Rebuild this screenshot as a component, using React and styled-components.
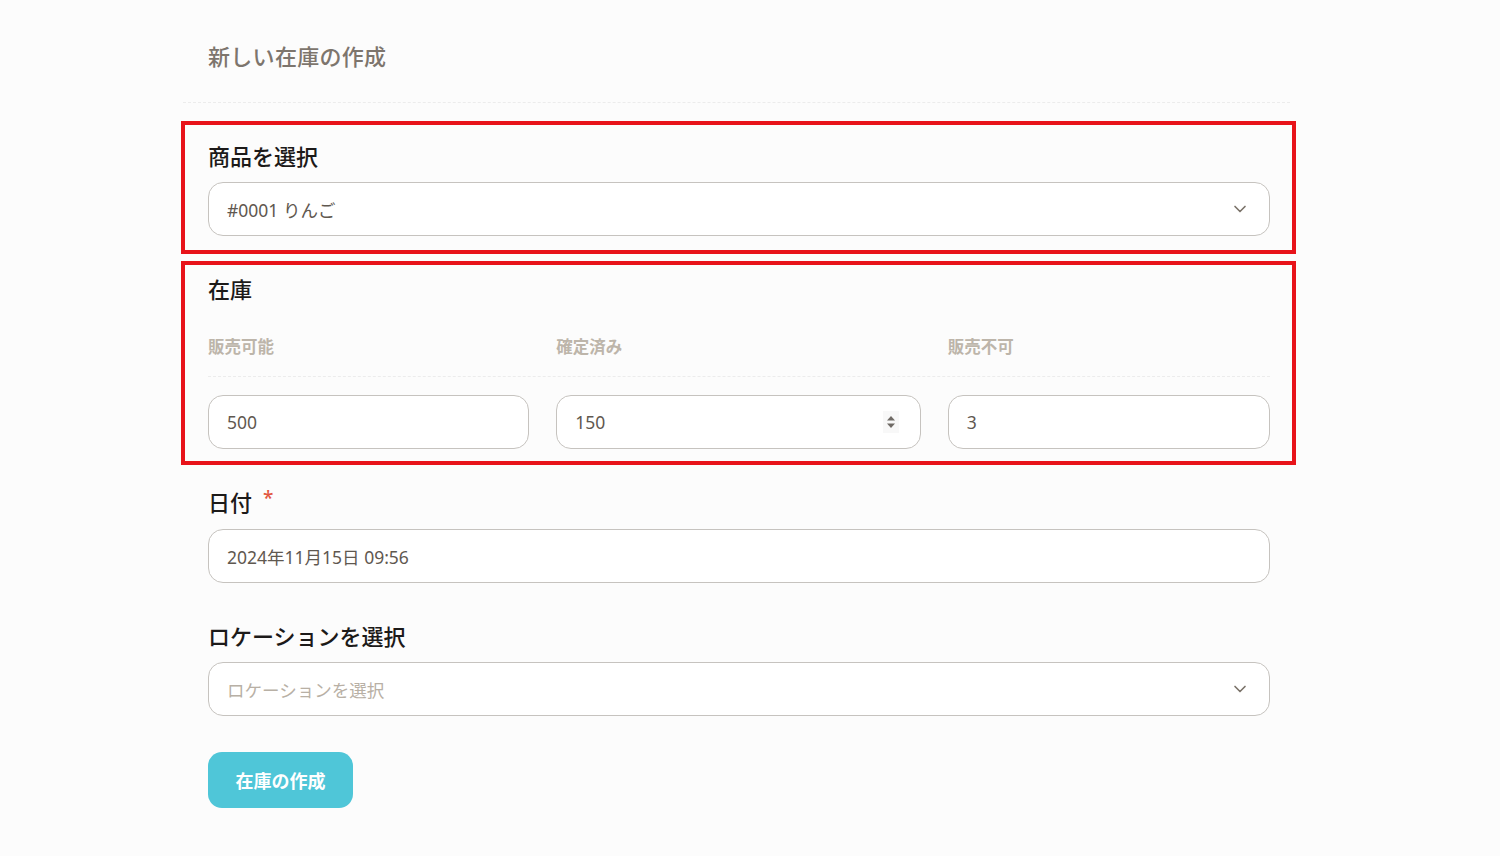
import React from "react";
import styled, { createGlobalStyle } from "styled-components";
import { ChevronDown } from "lucide-react";

const GlobalStyle = createGlobalStyle`
  html, body {
    margin: 0;
    padding: 0;
    background: #fcfcfc;
  }
  body {
    font-family: "Noto Sans", "Noto Sans CJK JP", sans-serif;
  }
`;

const Page = styled.main`
  width: 1115px;
  margin-left: 181px;
  padding-top: 41px;
  padding-bottom: 40px;
`;

const Title = styled.h1`
  margin: 0;
  padding-left: 27px;
  font-size: 22px;
  line-height: 30px;
  font-weight: 500;
  letter-spacing: 0.3px;
  color: #7d756d;
`;

const Divider = styled.hr`
  margin: 31px 6px 18px 2px;
  border: 0;
  border-top: 1px dashed #ececec;
  height: 0;
`;

const Section = styled.section`
  display: flex;
  flex-direction: column;
  border: 4px solid ${(p) => (p.$marked ? "#e8131a" : "transparent")};
  padding: ${(p) => p.$pad || "12px 22px 12px 23px"};
  & + & {
    margin-top: 7px;
  }
`;

const Label = styled.div`
  display: flex;
  align-items: flex-start;
  gap: 11px;
  font-size: 22px;
  line-height: 28px;
  font-weight: 500;
  color: #1c1a19;
  margin-bottom: ${(p) => p.$gap || "12px"};
`;

const Required = styled.span`
  color: #e2573f;
  font-size: 19px;
  line-height: 20px;
`;

const Field = styled.div`
  height: 54px;
  box-sizing: border-box;
  display: flex;
  align-items: center;
  justify-content: space-between;
  padding: 0 19px 0 18px;
  border: 1px solid #c6c3bf;
  border-radius: 15px;
  background: #fff;
  font-size: 17.5px;
  color: ${(p) => (p.$placeholder ? "#b8b0a5" : "#5f5850")};
`;

const StockGrid = styled.div`
  display: grid;
  grid-template-columns: 321fr 364fr 322fr;
  column-gap: 27px;
`;

const SubLabel = styled.div`
  font-size: 16.5px;
  line-height: 22px;
  font-weight: 700;
  color: #bdb5aa;
`;

const SubDivider = styled.div`
  grid-column: 1 / -1;
  border-top: 1px dashed #ececec;
  margin: 18px 0;
`;

const Spinner = styled.span`
  display: flex;
  align-items: center;
  justify-content: center;
  width: 16px;
  height: 22px;
  margin-right: 1px;
  background: #f8f8f8;
`;

const ButtonRow = styled.div`
  padding-left: 27px;
  margin-top: 20px;
`;

const SubmitButton = styled.button`
  width: 145px;
  height: 56px;
  border: 0;
  border-radius: 14px;
  background: #4fc6d8;
  color: #fff;
  font-family: inherit;
  font-size: 18px;
  font-weight: 700;
  cursor: pointer;
`;

const Chevron = () => <ChevronDown size={20} color="#7a7269" strokeWidth={2} />;

const SpinIcon = () => (
  <Spinner>
    <svg width="10" height="16" viewBox="0 0 10 16">
      <path d="M5 2 L9 6.5 H1 Z" fill="#6f6a65" />
      <path d="M5 14 L9 9.5 H1 Z" fill="#6f6a65" />
    </svg>
  </Spinner>
);

export default function App() {
  return (
    <>
      <GlobalStyle />
      <Page>
        <Title>新しい在庫の作成</Title>
        <Divider />

        {/* 商品 */}
        <Section $marked $pad="17px 22px 14px 23px">
          <Label>商品を選択</Label>
          <Field>
            <span>#0001 りんご</span>
            <Chevron />
          </Field>
        </Section>

        {/* 在庫 */}
        <Section $marked $pad="10px 22px 12px 23px">
          <Label $gap="33px">在庫</Label>
          <StockGrid>
            <SubLabel>販売可能</SubLabel>
            <SubLabel>確定済み</SubLabel>
            <SubLabel>販売不可</SubLabel>
            <SubDivider />
            <Field>
              <span>500</span>
            </Field>
            <Field style={{ paddingRight: 20 }}>
              <span>150</span>
              <SpinIcon />
            </Field>
            <Field>
              <span>3</span>
            </Field>
          </StockGrid>
        </Section>

        {/* 日付 */}
        <Section>
          <Label $gap="13px">
            日付 <Required>*</Required>
          </Label>
          <Field>
            <span>2024年11月15日 09:56</span>
          </Field>
        </Section>

        {/* ロケーション */}
        <Section>
          <Label>ロケーションを選択</Label>
          <Field $placeholder>
            <span>ロケーションを選択</span>
            <Chevron />
          </Field>
        </Section>

        <ButtonRow>
          <SubmitButton type="button">在庫の作成</SubmitButton>
        </ButtonRow>
      </Page>
    </>
  );
}
